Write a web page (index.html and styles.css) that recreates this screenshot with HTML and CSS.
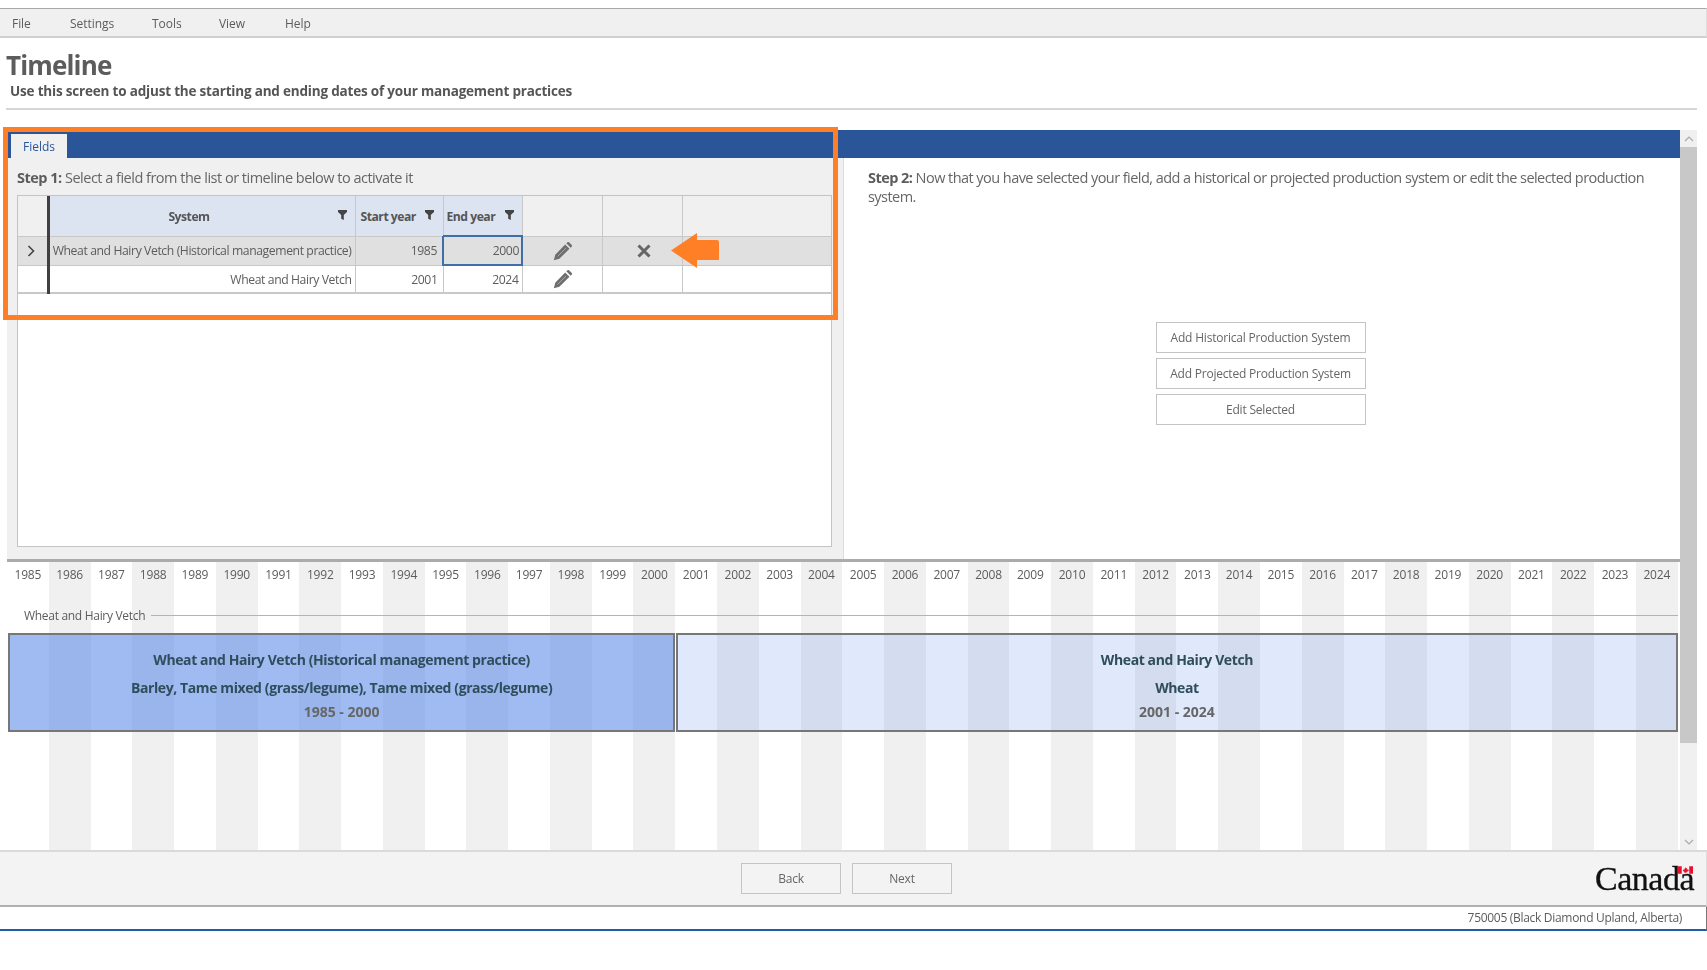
FILE: index.html
```html
<!DOCTYPE html>
<html lang="en">
<head>
<meta charset="utf-8">
<title>Timeline</title>
<link rel="stylesheet" href="styles.css">
</head>
<body>
<div class="app">
  <nav class="menu">
    <span class="menu-item m-file">File</span>
    <span class="menu-item m-settings">Settings</span>
    <span class="menu-item m-tools">Tools</span>
    <span class="menu-item m-view">View</span>
    <span class="menu-item m-help">Help</span>
  </nav>

  <header class="head">
    <h1>Timeline</h1>
    <p>Use this screen to adjust the starting and ending dates of your management practices</p>
    <div class="rule"></div>
  </header>

  <main class="main">
    <div class="content">
      <div class="tabbar"><span class="tab">Fields</span></div>
      <div class="panes">
        <section class="pane-left">
          <p class="step"><b>Step 1:</b> Select a field from the list or timeline below to activate it</p>
          <div class="grid-wrap">
            <table class="grid">
              <colgroup>
                <col class="c-h"><col class="c-sys"><col class="c-start"><col class="c-end"><col class="c-ed"><col class="c-del"><col class="c-rest">
              </colgroup>
              <thead>
                <tr>
                  <th class="rowhead"></th>
                  <th class="hcol sys"><span class="sys-label">System</span><svg class="filter" viewBox="0 0 9 10"><path d="M0 0h9v2L5.8 5v5L3.2 8.8V5L0 2z"/></svg></th>
                  <th class="hcol h-start"><span>Start year</span><svg class="filter" viewBox="0 0 9 10"><path d="M0 0h9v2L5.8 5v5L3.2 8.8V5L0 2z"/></svg></th>
                  <th class="hcol h-end"><span>End year</span><svg class="filter" viewBox="0 0 9 10"><path d="M0 0h9v2L5.8 5v5L3.2 8.8V5L0 2z"/></svg></th>
                  <th></th><th></th><th></th>
                </tr>
              </thead>
              <tbody>
                <tr class="selected">
                  <td class="rowhead"><svg class="chev" viewBox="0 0 8 12"><path d="M1.5 1l5 5-5 5" fill="none" stroke="#444" stroke-width="1.6"/></svg></td>
                  <td class="num">Wheat and Hairy Vetch (Historical management practice)</td>
                  <td class="num year-start">1985</td>
                  <td class="num active">2000</td>
                  <td class="icon icon-edit"><svg class="pencil" viewBox="0 0 24 24"><path d="M1 23l1.7-6.6L14.6 4.2l5.2 5.2L7.6 21.3z"/><path d="M16 2.8l1.3-1.3q1-.9 2 0l3.2 3.2q.9 1 0 2L21.2 8z"/><path class="pencil-shine" d="M5.5 18.5L15.5 8.5"/></svg></td>
                  <td class="icon icon-del"><svg class="cross" viewBox="0 0 14 14"><path d="M1.5 1.5l11 11M12.5 1.5l-11 11"/></svg></td>
                  <td></td>
                </tr>
                <tr>
                  <td class="rowhead"></td>
                  <td class="num">Wheat and Hairy Vetch</td>
                  <td class="num year-start">2001</td>
                  <td class="num">2024</td>
                  <td class="icon icon-edit"><svg class="pencil" viewBox="0 0 24 24"><path d="M1 23l1.7-6.6L14.6 4.2l5.2 5.2L7.6 21.3z"/><path d="M16 2.8l1.3-1.3q1-.9 2 0l3.2 3.2q.9 1 0 2L21.2 8z"/><path class="pencil-shine" d="M5.5 18.5L15.5 8.5"/></svg></td>
                  <td></td>
                  <td></td>
                </tr>
              </tbody>
            </table>
          </div>
        </section>
        <section class="pane-right">
          <p class="step"><b>Step 2:</b> Now that you have selected your field, add a historical or projected production system or edit the selected production system.</p>
          <div class="actions">
            <button class="btn">Add Historical Production System</button>
            <button class="btn">Add Projected Production System</button>
            <button class="btn">Edit Selected</button>
          </div>
        </section>
      </div>
      <section class="timeline">
        <div class="years">
          <div class="yr">1985</div><div class="yr alt">1986</div><div class="yr">1987</div><div class="yr alt">1988</div><div class="yr">1989</div><div class="yr alt">1990</div><div class="yr">1991</div><div class="yr alt">1992</div><div class="yr">1993</div><div class="yr alt">1994</div>
          <div class="yr">1995</div><div class="yr alt">1996</div><div class="yr">1997</div><div class="yr alt">1998</div><div class="yr">1999</div><div class="yr alt">2000</div><div class="yr">2001</div><div class="yr alt">2002</div><div class="yr">2003</div><div class="yr alt">2004</div>
          <div class="yr">2005</div><div class="yr alt">2006</div><div class="yr">2007</div><div class="yr alt">2008</div><div class="yr">2009</div><div class="yr alt">2010</div><div class="yr">2011</div><div class="yr alt">2012</div><div class="yr">2013</div><div class="yr alt">2014</div>
          <div class="yr">2015</div><div class="yr alt">2016</div><div class="yr">2017</div><div class="yr alt">2018</div><div class="yr">2019</div><div class="yr alt">2020</div><div class="yr">2021</div><div class="yr alt">2022</div><div class="yr">2023</div><div class="yr alt">2024</div>
        </div>
        <div class="group"><span>Wheat and Hairy Vetch</span><i></i></div>
        <div class="block hist">
          <strong>Wheat and Hairy Vetch (Historical management practice)</strong>
          <strong>Barley, Tame mixed (grass/legume), Tame mixed (grass/legume)</strong>
          <em>1985 - 2000</em>
        </div>
        <div class="block proj">
          <strong>Wheat and Hairy Vetch</strong>
          <strong>Wheat</strong>
          <em>2001 - 2024</em>
        </div>
      </section>
    </div>
    <div class="scrollbar">
      <div class="sb-btn"><svg viewBox="0 0 10 6"><path d="M1 5l4-4 4 4" fill="none" stroke="#aaa" stroke-width="1.2"/></svg></div>
      <div class="sb-thumb"></div>
      <div class="sb-track"></div>
      <div class="sb-btn"><svg viewBox="0 0 10 6"><path d="M1 1l4 4 4-4" fill="none" stroke="#aaa" stroke-width="1.2"/></svg></div>
    </div>
  </main>

  <footer class="foot">
    <button class="btn nav">Back</button>
    <button class="btn nav">Next</button>
    <div class="canada">Canada<svg class="flag" viewBox="0 0 16 8"><rect width="4" height="8" fill="#e8112d"/><rect x="12" width="4" height="8" fill="#e8112d"/><path d="M8 .8l.8 1.4.8-.4-.3 1.8.9-.7.3.7 1-.2-.3 1.1.4.3L9.2 6l.1.8-1.2-.2V8h-.2V6.6l-1.2.2.1-.8-1.7-1.2.4-.3-.3-1.1 1 .2.3-.7.9.7-.3-1.8.8.4z" fill="#e8112d"/></svg></div>
  </footer>
  <div class="status">750005 (Black Diamond Upland, Alberta)</div>

  <div class="highlight"></div>
  <svg class="arrow" viewBox="0 0 48 35"><path d="M0 17.5L26 0v7h20q2 0 2 2v18H26v8z" fill="#ff7f27"/></svg>
</div>
</body>
</html>
```
FILE: styles.css
```css
* { box-sizing: border-box; }
html, body { margin: 0; padding: 0; background: #fff; }
body { font-family: "Open Sans", "Noto Sans", sans-serif; color: #5c5c5c; }
.app { position: relative; width: 1707px; height: 970px; overflow: hidden; padding-top: 8px; filter: blur(.3px); }

.menu { display: flex; height: 30px; background: #f0f0f0; border-top: 1px solid #a8a8a8; border-right: 1px solid #ddd; border-bottom: 2px solid #d0d0d0; font-size: 12px; letter-spacing: -.05px; align-items: center; padding: 1px 0 0 12px; }
.menu-item { display: block; }
.m-file { width: 58px; }
.m-settings { width: 82px; }
.m-tools { width: 67px; }
.m-view { width: 66px; }

.head { height: 92px; padding: 13px 10px 0 6px; }
.head h1 { margin: 0; font-size: 26px; line-height: 28px; font-weight: 700; color: #5c5c5c; letter-spacing: -.85px; }
.head p { margin: 2px 0 0 4px; font-size: 13.5px; line-height: 20px; font-weight: 700; color: #555; letter-spacing: -.19px; }
.rule { height: 2px; margin-top: 7px; background: #d6d6d6; }

.main { display: flex; height: 720px; margin: 0 10px 0 7px; }
.content { width: 1673px; display: flex; flex-direction: column; }
.tabbar { height: 28px; background: #2a5699; padding: 4px 0 0 4px; flex: none; }
.tab { display: block; width: 56px; height: 24px; background: #f0f0f0; color: #2a5699; font-size: 12px; line-height: 26px; text-align: center; }

.panes { display: flex; height: 401px; flex: none; }
.pane-left { width: 836px; background: #f0f0f0; padding: 10px 11px 12px 10px; display: flex; flex-direction: column; }
.pane-right { flex: 1; background: #fff; padding: 10px 16px 0 24px; border-left: 1px solid #ddd; display: flex; flex-direction: column; }
.step { margin: 0; font-size: 14.5px; line-height: 19px; color: #666; letter-spacing: -.5px; }
.step b { font-weight: 700; color: #5c5c5c; }
.pane-left .step { height: 27px; }
.pane-right .step { letter-spacing: -.55px; }

.grid-wrap { flex: 1; background: #fff; border: 1px solid #c4c4c4; }
.grid { border-collapse: collapse; table-layout: fixed; width: 813px; font-size: 12.2px; letter-spacing: -.4px; }
.c-h { width: 30px; } .c-sys { width: 307px; } .c-start { width: 88px; } .c-end { width: 79px; } .c-ed { width: 80px; } .c-del { width: 80px; } .c-rest { width: 149px; }
.grid th { height: 40px; padding: 0; background: #f0f0f0; border-right: 1px solid #c8c8c8; border-bottom: 1px solid #c8c8c8; font-weight: 700; font-size: 12.2px; color: #555; letter-spacing: -.5px; }
.grid th:last-child, .grid td:last-child { border-right: 0; }
.grid td { height: 29px; padding: 0; border-right: 1px solid #c8c8c8; border-bottom: 1px solid #c8c8c8; color: #5c5c5c; }
.grid tbody tr:last-child td { height: 28px; border-bottom: 2px solid #c8c8c8; padding-top: 1px; }
.grid th.rowhead, .grid td.rowhead { border-right: 3px solid #404040; text-align: center; }
.grid .hcol { background: #dce4f2; text-align: left; padding: 2px 0 0 5px; white-space: nowrap; position: relative; }
.grid .h-end { padding-left: 3px; }
.sys-label { position: absolute; left: 0; right: 26px; text-align: center; top: 12px; line-height: 18px; }
.filter { position: absolute; top: 14px; right: 8px; width: 9px; height: 10px; fill: #444; }
.h-start .filter { right: 9px; }
.selected td { background: #e0e0e0; }
.num { text-align: right; white-space: nowrap; }
.grid tbody .num { padding-right: 3px; }
.grid tbody .year-start { padding-right: 5px; }
.grid td.active { border: 2px solid #3f6ea8; padding-right: 2px; }
.icon { text-align: center; }
.grid .icon-edit { padding-left: 2px; }
.grid .icon-del { padding-left: 4px; }
.pencil { width: 20px; height: 20px; fill: #6e6e6e; display: block; margin: 0 auto; }
.pencil-shine { stroke: #a8a8a8; stroke-width: 1.2; fill: none; }
.cross { width: 14px; height: 14px; display: block; margin: 0 auto; stroke: #666; stroke-width: 3; fill: none; }
.chev { width: 8px; height: 12px; display: block; margin: 0 auto; position: relative; left: -1px; }

.actions { display: flex; flex-direction: column; align-items: center; gap: 5px; margin-top: 116px; margin-left: -11px; }
.btn { font-family: inherit; font-size: 12px; color: #666; background: #fff; border: 1px solid #c4c4c4; padding: 0; letter-spacing: -.2px; }
.actions .btn { width: 210px; height: 31px; }

.timeline { flex: 1; display: grid; grid-template-columns: repeat(40, 41.77px); grid-template-rows: 26px 45px 99px 1fr; border-top: 3px solid #ababab; background: #fff; }
.years { grid-area: 1 / 1 / -1 / -1; display: grid; grid-template-columns: repeat(40, 41.77px); }
.yr { font-size: 12px; line-height: 26px; text-align: center; color: #5c5c5c; letter-spacing: -.2px; }
.yr.alt { background: #f0f0f0; }
.group { grid-row: 2; grid-column: 1 / -1; display: flex; align-items: center; padding: 9px 0 0 17px; gap: 6px; font-size: 12px; letter-spacing: -.3px; height: 45px; }
.group span { white-space: nowrap; }
.group i { flex: 1; height: 1px; background: #b4b4b4; }
.block { grid-row: 3; display: flex; flex-direction: column; align-items: center; border: 2px solid #777; font-size: 14px; }
.block strong { font-weight: 700; color: #2f4d5c; line-height: 24px; letter-spacing: -.4px; white-space: nowrap; }
.block strong:first-child { margin-top: 13px; margin-bottom: 4px; }
.block em { font-style: normal; font-weight: 700; color: #666; line-height: 24px; }
.hist { grid-column: 1 / span 16; margin-left: 1px; background: rgba(90, 138, 231, .58); }
.proj { grid-column: 17 / span 24; margin-left: 1px; background: rgba(100, 145, 235, .2); }

.scrollbar { width: 17px; display: flex; flex-direction: column; background: #f0f0f0; }
.sb-btn { height: 17px; display: flex; align-items: center; justify-content: center; }
.sb-btn svg { width: 10px; height: 6px; }
.sb-thumb { height: 596px; background: #c8c8c8; }
.sb-track { flex: 1; }

.foot { display: flex; align-items: center; height: 57px; padding: 0 12px 0 741px; background: #f3f3f3; border-top: 2px solid #dadada; border-bottom: 2px solid #b0b0b0; gap: 11px; border-right: 1px solid #ddd; }
.btn.nav { width: 100px; height: 31px; background: #f3f3f3; }
.canada { position: relative; margin-left: auto; font-family: "Liberation Serif", serif; font-size: 34px; line-height: 30px; color: #111; letter-spacing: -.5px; -webkit-text-stroke: .3px #111; }
.flag { position: absolute; top: 2px; right: 1px; width: 15px; height: 8px; }

.status { height: 24px; padding: 0 24px 2px 0; text-align: right; font-size: 12px; line-height: 22px; background: #fff; border-bottom: 2px solid #1e5fa8; border-right: 1px solid #777; letter-spacing: -.3px; color: #5c5c5c; }

.highlight { position: absolute; left: 3px; top: 127px; width: 835px; height: 193px; border: 5px solid #ff7f27; pointer-events: none; }
.arrow { position: absolute; left: 671px; top: 233px; width: 48px; height: 35px; }
```
